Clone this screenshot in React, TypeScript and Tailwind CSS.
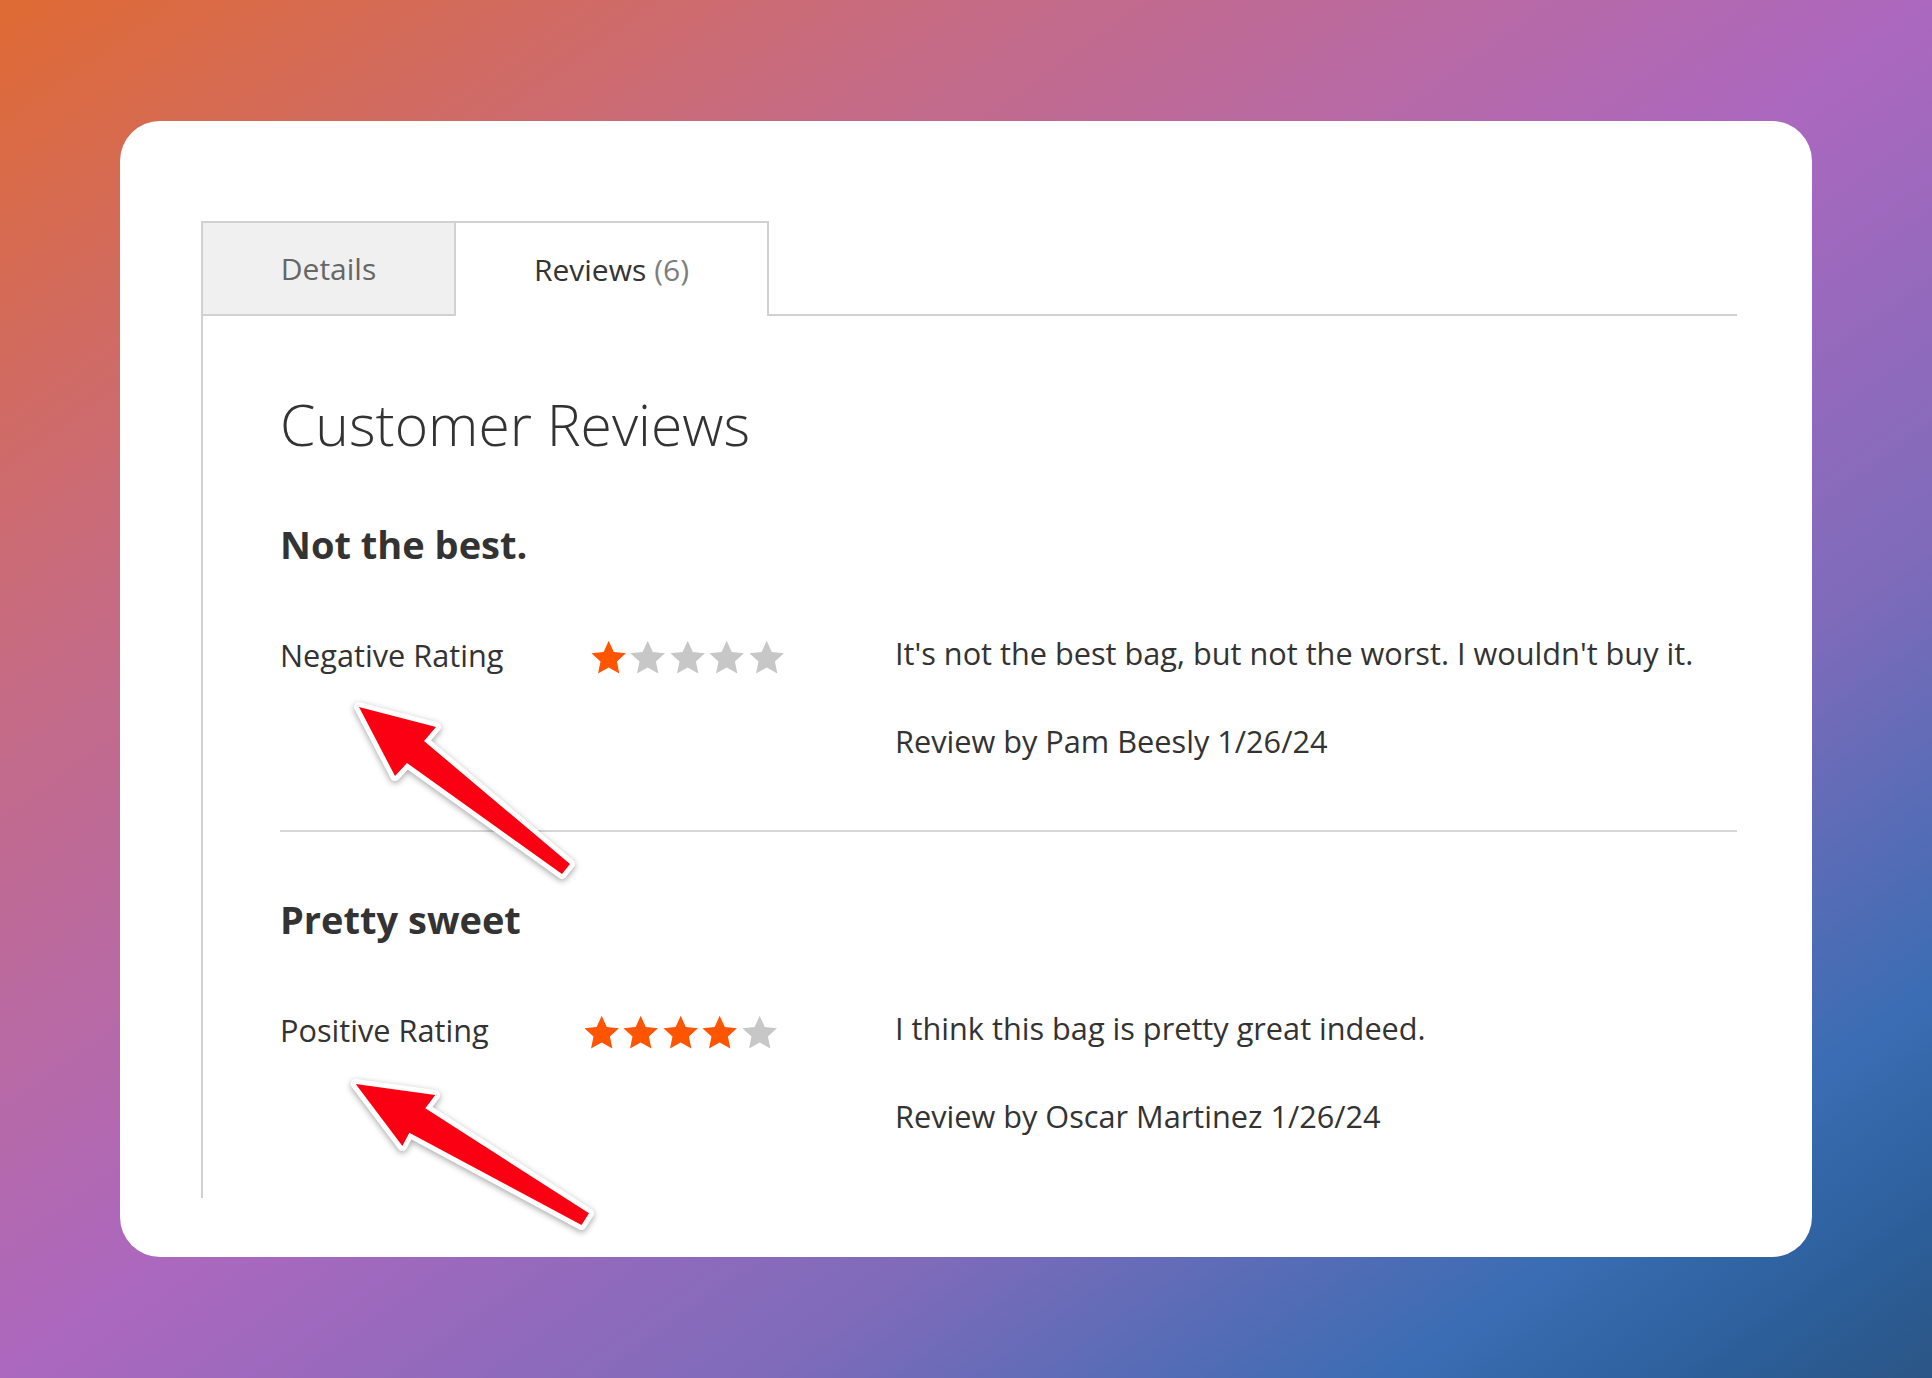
import React from "react";

const STAR = "12,1.5 15.1,8.3 22.5,9.1 17,14.1 18.5,21.5 12,17.8 5.5,21.5 7,14.1 1.5,9.1 8.9,8.3";

function Stars({ value }: { value: number }) {
  return (
    <div className="flex mt-[-2px]">
      {[0, 1, 2, 3, 4].map((i) => (
        <svg key={i} viewBox="0 0 24 24" className="w-[39.4px] h-[40px] shrink-0">
          <polygon points={STAR} fill={i < value ? "#ff5501" : "#c7c7c7"} />
        </svg>
      ))}
    </div>
  );
}

function Review({
  title,
  label,
  labelWidth,
  value,
  text,
  by,
}: {
  title: string;
  label: string;
  labelWidth: string;
  value: number;
  text: string;
  by: string;
}) {
  return (
    <div>
      <h3 className="text-[38px] leading-[38px] font-bold text-[#333333]">{title}</h3>
      <div className="mt-[77px] flex items-start">
        <div className="w-[615px] shrink-0 flex items-start">
          <div className={labelWidth + " shrink-0 text-[30.7px] leading-[30px] text-[#333333]"}>{label}</div>
          <Stars value={value} />
        </div>
        <div className="mt-[-2px] text-[30.7px] leading-[30px] text-[#333333]">
          <p>{text}</p>
          <p className="mt-[58px]">{by}</p>
        </div>
      </div>
    </div>
  );
}

function Arrow({ points }: { points: string }) {
  return (
    <polygon
      points={points}
      fill="#fb0012"
      stroke="#ffffff"
      strokeWidth={10}
      strokeLinejoin="round"
      style={{ paintOrder: "stroke", filter: "drop-shadow(0px 2px 3px rgba(0,0,0,0.35))" }}
    />
  );
}

export default function App() {
  return (
    <div className="relative w-full h-[1378px] overflow-hidden font-['Open_Sans',sans-serif] bg-[linear-gradient(to_bottom_right,#df6a33_0%,#c66b84_25%,#ac68bf_50%,#7e6bba_70%,#3a6db3_86%,#2c5f9a_94%,#2b5585_100%)] pt-[121px] pl-[120px]">
      <div className="w-[1692px] h-[1136px] bg-white rounded-[40px] pt-[100px] pl-[81px] pr-[75px]">
        {/* Tabs */}
        <div className="flex h-[95px]">
          <div className="w-[255px] h-[95px] shrink-0 flex items-center justify-center bg-[#f0f0f0] border-2 border-[#d1d1d1] text-[30px] leading-[30px] text-[#666666]">
            Details
          </div>
          <div className="w-[313px] h-[95px] shrink-0 flex items-center justify-center border-t-2 border-r-2 border-[#d1d1d1] text-[30px] leading-[30px] text-[#333333]">
            Reviews <span className="ml-[8px] text-[#7d7d7d]">(6)</span>
          </div>
          <div className="flex-1 border-b-2 border-[#d1d1d1]" />
        </div>
        {/* Panel */}
        <div className="h-[882px] border-l-2 border-[#d1d1d1] pl-[77px]">
          <h2 className="pt-[80px] text-[57px] leading-[57px] font-light text-[#333333]">Customer Reviews</h2>
          <div className="mt-[72px]">
            <Review
              title="Not the best."
              label="Negative Rating"
              labelWidth="w-[309px]"
              value={1}
              text="It's not the best bag, but not the worst. I wouldn't buy it."
              by="Review by Pam Beesly 1/26/24"
            />
          </div>
          <div className="mt-[74px] h-[2px] bg-[#d6d6d6]" />
          <div className="mt-[68px]">
            <Review
              title="Pretty sweet"
              label="Positive Rating"
              labelWidth="w-[302px]"
              value={4}
              text="I think this bag is pretty great indeed."
              by="Review by Oscar Martinez 1/26/24"
            />
          </div>
        </div>
      </div>
      {/* Annotation arrows */}
      <svg className="absolute left-0 top-0 pointer-events-none" width={1932} height={1378} viewBox="0 0 1932 1378">
        <Arrow points="359,707 436,727 424,741 570,864 562,874 407,763 395,776" />
        <Arrow points="355.7,1084 435.3,1095 425.3,1108.3 589,1213.3 581.5,1225 409.3,1132.7 402.4,1146" />
      </svg>
    </div>
  );
}
